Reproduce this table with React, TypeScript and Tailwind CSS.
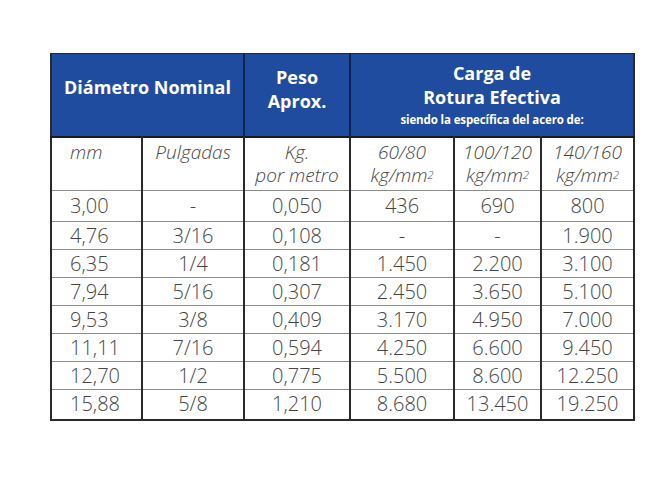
import React from 'react'

const rows = [
  { h: 'h-[31px]', cells: ['3,00', '-', '0,050', '436', '690', '800'] },
  { h: 'h-[28px]', cells: ['4,76', '3/16', '0,108', '-', '-', '1.900'] },
  { h: 'h-[28px]', cells: ['6,35', '1/4', '0,181', '1.450', '2.200', '3.100'] },
  { h: 'h-[28px]', cells: ['7,94', '5/16', '0,307', '2.450', '3.650', '5.100'] },
  { h: 'h-[28px]', cells: ['9,53', '3/8', '0,409', '3.170', '4.950', '7.000'] },
  { h: 'h-[28px]', cells: ['11,11', '7/16', '0,594', '4.250', '6.600', '9.450'] },
  { h: 'h-[28px]', cells: ['12,70', '1/2', '0,775', '5.500', '8.600', '12.250'] },
  { h: 'h-[30px]', cells: ['15,88', '5/8', '1,210', '8.680', '13.450', '19.250'] },
]

const head = "font-['Open_Sans',sans-serif] font-bold text-white"
const body = "font-['Open_Sans',sans-serif] font-light text-[#454545]"

function Kg() {
  return (
    <>
      kg/mm<sup className="text-[11px] relative -top-[3px]">2</sup>
    </>
  )
}

export default function App() {
  return (
    <div className="w-[665px] h-[499px] bg-white pl-[50px] pt-[53px]">
      <table className="table-fixed w-[583px] border-2 border-[#2a2a2a] border-t-[1px]">
        <colgroup>
          <col className="w-[91px]" />
          <col className="w-[102px]" />
          <col className="w-[106px]" />
          <col className="w-[104px]" />
          <col className="w-[87px]" />
          <col className="w-[93px]" />
        </colgroup>
        <thead>
          <tr className="h-[83px] bg-[#1f4c9e]">
            <th colSpan={2} className={`${head} align-top pt-[21px] text-[18px] leading-[24px] border-r-2 border-[#0f2550]`}>
              Diámetro Nominal
            </th>
            <th className={`${head} align-top pt-[11px] text-[18px] leading-[24px] border-r-2 border-[#0f2550]`}>
              Peso
              <br />
              Aprox.
            </th>
            <th colSpan={3} className={`${head} align-top pt-[7px] text-[18px] leading-[24px]`}>
              Carga de
              <br />
              Rotura Efectiva
              <div className="mt-[4px] text-[11.5px] leading-[14px] tracking-[-0.01em]">
                siendo la específica del acero de:
              </div>
            </th>
          </tr>
          <tr className={`h-[54px] ${body} italic text-[19px] leading-[23px] border-t-2 border-[#1b1b1b]`}>
            <th className="align-top pt-[3px] pl-[18px] text-left font-light border-r-2 border-[#2a2a2a] border-b border-b-[#8c8c8c]">
              mm
            </th>
            <th className="align-top pt-[3px] font-light border-r-2 border-[#2a2a2a] border-b border-b-[#8c8c8c]">
              Pulgadas
            </th>
            <th className="align-top pt-[3px] font-light border-r-2 border-[#2a2a2a] border-b border-b-[#8c8c8c]">
              Kg.
              <br />
              por metro
            </th>
            <th className="align-top pt-[3px] font-light border-r-2 border-[#2a2a2a] border-b border-b-[#8c8c8c]">
              60/80
              <br />
              <Kg />
            </th>
            <th className="align-top pt-[3px] font-light border-r-2 border-[#2a2a2a] border-b border-b-[#8c8c8c]">
              100/120
              <br />
              <Kg />
            </th>
            <th className="align-top pt-[3px] font-light border-b border-b-[#8c8c8c]">
              140/160
              <br />
              <Kg />
            </th>
          </tr>
        </thead>
        <tbody>
          {rows.map((r, i) => (
            <tr key={i} className={`${r.h} ${body} text-[20px] leading-none`}>
              {r.cells.map((c, j) => (
                <td
                  key={j}
                  className={`align-middle border-b border-b-[#8c8c8c] ${
                    j === 0 ? 'text-left pl-[18px]' : 'text-center'
                  } ${j < 5 ? 'border-r-2 border-r-[#2a2a2a]' : ''}`}
                >
                  {c}
                </td>
              ))}
            </tr>
          ))}
        </tbody>
      </table>
    </div>
  )
}
